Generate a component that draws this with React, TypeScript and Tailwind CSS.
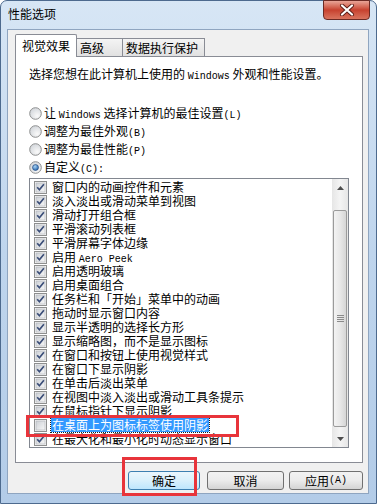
import React from "react";

const cjk = "font-['Noto_Sans_CJK_SC',sans-serif]";

function M({ children }: { children: React.ReactNode }) {
  return <span className="font-['Liberation_Mono',monospace] text-[10px]">{children}</span>;
}

function CheckBox({ checked }: { checked: boolean }) {
  return (
    <svg width="13" height="13" viewBox="0 0 13 13" className="shrink-0">
      <defs>
        <linearGradient id="cbg" x1="0" y1="0" x2="1" y2="1">
          <stop offset="0" stopColor="#cdd1d6" />
          <stop offset="1" stopColor="#f7f7f7" />
        </linearGradient>
      </defs>
      <rect x="0.5" y="0.5" width="12" height="12" fill="#f4f4f4" stroke="#8e8f8f" />
      <rect x="2" y="2" width="9" height="9" fill="url(#cbg)" stroke="#aeb3b9" strokeWidth="0.6" />
      {checked && (
        <path d="M3.2 6.3 L5.4 8.8 L9.9 3.3" fill="none" stroke="#3a4d78" strokeWidth="1.7" />
      )}
    </svg>
  );
}

function Radio({ checked }: { checked: boolean }) {
  return (
    <svg width="13" height="13" viewBox="0 0 13 13" className="shrink-0">
      <defs>
        <radialGradient id="rbg" cx="0.65" cy="0.7" r="0.8">
          <stop offset="0" stopColor="#fafafa" />
          <stop offset="1" stopColor="#cfd3d8" />
        </radialGradient>
        <radialGradient id="rdot" cx="0.4" cy="0.35" r="0.7">
          <stop offset="0" stopColor="#a9d4f5" />
          <stop offset="1" stopColor="#1d5ea8" />
        </radialGradient>
      </defs>
      <circle cx="6.5" cy="6.5" r="5.8" fill="url(#rbg)" stroke="#8e8f8f" />
      {checked && <circle cx="6.5" cy="6.5" r="3" fill="url(#rdot)" stroke="#25487c" strokeWidth="0.6" />}
    </svg>
  );
}

const items: { label: React.ReactNode; checked: boolean; selected?: boolean }[] = [
  { label: "窗口内的动画控件和元素", checked: true },
  { label: "淡入淡出或滑动菜单到视图", checked: true },
  { label: "滑动打开组合框", checked: true },
  { label: "平滑滚动列表框", checked: true },
  { label: "平滑屏幕字体边缘", checked: true },
  { label: <>启用 <M>Aero Peek</M></>, checked: true },
  { label: "启用透明玻璃", checked: true },
  { label: "启用桌面组合", checked: true },
  { label: "任务栏和「开始」菜单中的动画", checked: true },
  { label: "拖动时显示窗口内容", checked: true },
  { label: "显示半透明的选择长方形", checked: true },
  { label: "显示缩略图，而不是显示图标", checked: true },
  { label: "在窗口和按钮上使用视觉样式", checked: true },
  { label: "在窗口下显示阴影", checked: true },
  { label: "在单击后淡出菜单", checked: true },
  { label: "在视图中淡入淡出或滑动工具条提示", checked: true },
  { label: "在鼠标指针下显示阴影", checked: true },
  { label: "在桌面上为图标标签使用阴影", checked: false, selected: true },
  { label: "在最大化和最小化时动态显示窗口", checked: true },
];

function WinButton({ children, def, w }: { children: React.ReactNode; def?: boolean; w: string }) {
  return (
    <div
      className={`${w} h-[19px] rounded-[3px] border ${
        def ? "border-[#3c7fb1]" : "border-[#707070]"
      } bg-gradient-to-b ${
        def ? "from-[#eaf6fd] via-[#d9f0fc] to-[#bee6fd]" : "from-[#f2f2f2] via-[#ebebeb] to-[#d4d4d4]"
      } flex items-center justify-center text-[12px] leading-[14px] text-black`}
    >
      {children}
    </div>
  );
}

export default function App() {
  return (
    <div className={`relative w-[377px] h-[504px] bg-white ${cjk}`}>
      <div className="w-full h-full rounded-t-[7px] border border-[#4d6a8e] bg-gradient-to-b from-[#d7e6f5] via-[#bfd5ed] to-[#b3cce8] flex flex-col">
        {/* title bar */}
        <div className="h-[28px] flex items-start">
          <div className="pl-[7px] pt-[6px] text-[12px] leading-[14px] text-black">性能选项</div>
          <div className="ml-auto mr-[6px] -mt-px w-[47px] h-[20px] rounded-b-[4px] border border-[#6b2a24] bg-gradient-to-b from-[#e8a497] via-[#c7412f] to-[#d9735e] flex items-center justify-center">
            <svg width="16" height="12" viewBox="0 0 16 12">
              <path d="M3 1.5 L13 10.5 M13 1.5 L3 10.5" stroke="#5a1c16" strokeWidth="4" strokeLinecap="round" />
              <path d="M3 1.5 L13 10.5 M13 1.5 L3 10.5" stroke="#ffffff" strokeWidth="2.2" strokeLinecap="round" />
            </svg>
          </div>
        </div>

        {/* client area */}
        <div className="ml-[6px] w-[362px] h-[465px] border border-[#8fa5c0] bg-[#f0f0f0] flex flex-col">
          {/* tabs */}
          <div className="mt-[4px] ml-[7px] h-[22px] flex items-end text-[12px] leading-[14px] text-black">
            <div className="relative z-10 -mb-px w-[62px] h-[23px] border border-b-0 border-[#898c95] bg-white pl-[6px] pt-[4px] rounded-t-[2px]">
              视觉效果
            </div>
            <div className="w-[46px] h-[18px] border border-l-0 border-b-0 border-[#898c95] bg-gradient-to-b from-[#f4f4f4] to-[#e1e1e1] pl-[3px] pt-[2px]">
              高级
            </div>
            <div className="w-[82px] h-[18px] border border-l-0 border-b-0 border-[#898c95] bg-gradient-to-b from-[#f4f4f4] to-[#e1e1e1] pl-[3px] pt-[2px]">
              数据执行保护
            </div>
          </div>

          {/* panel */}
          <div className="ml-[7px] w-[348px] h-[407px] border border-[#898c95] bg-white flex flex-col pl-[13px] text-[12px] leading-[14px] text-black">
            <div className="mt-[10px] h-[14px] whitespace-nowrap">
              选择您想在此计算机上使用的 <M>Windows</M> 外观和性能设置。
            </div>
            <div className="mt-[23px] flex flex-col">
              {[
                { l: <>让 <M>Windows</M> 选择计算机的最佳设置<M>(L)</M></>, c: false },
                { l: <>调整为最佳外观<M>(B)</M></>, c: false },
                { l: <>调整为最佳性能<M>(P)</M></>, c: false },
                { l: <>自定义<M>(C):</M></>, c: true },
              ].map((r, i) => (
                <div key={i} className="h-[18px] flex items-center whitespace-nowrap">
                  <Radio checked={r.c} />
                  <span className="ml-[2px] inline-block h-[14px] leading-[14px]">{r.l}</span>
                </div>
              ))}
            </div>

            {/* list */}
            <div className="mt-[2px] w-[320px] h-[270px] border border-[#828790] flex">
              <div className="flex-1 pt-[1px] overflow-hidden">
                {items.map((it, i) => (
                  <div key={i} className="h-[14px] flex items-center whitespace-nowrap">
                    <div className="ml-[4px]">
                      <CheckBox checked={it.checked} />
                    </div>
                    <span
                      className={`ml-[4px] px-px inline-block h-[14px] leading-[14px] ${
                        it.selected ? "bg-[#3399ff] text-white outline-1 outline-dotted outline-[#1c1c1c]" : ""
                      }`}
                    >
                      {it.label}
                    </span>
                  </div>
                ))}
              </div>
              {/* scrollbar */}
              <div className="w-[16px] flex flex-col bg-gradient-to-r from-[#e6e6e6] via-[#f4f4f4] to-[#e6e6e6]">
                <div className="h-[17px] flex items-center justify-center">
                  <svg width="7" height="4" viewBox="0 0 7 4">
                    <path d="M0 4 L3.5 0 L7 4 Z" fill="#4d4d4d" />
                  </svg>
                </div>
                <div className="h-[14px]" />
                <div className="h-[217px] mx-px rounded-[2px] border border-[#9b9b9b] bg-gradient-to-r from-[#f3f3f3] via-[#e8e8e8] to-[#d6d6d6] flex items-center justify-center">
                  <div className="flex flex-col gap-px">
                    <div className="w-[7px] h-px bg-[#8a8a8a]" />
                    <div className="w-[7px] h-px bg-[#8a8a8a]" />
                    <div className="w-[7px] h-px bg-[#8a8a8a]" />
                    <div className="w-[7px] h-px bg-[#8a8a8a]" />
                  </div>
                </div>
                <div className="h-[3px]" />
                <div className="h-[17px] flex items-center justify-center">
                  <svg width="7" height="4" viewBox="0 0 7 4">
                    <path d="M0 0 L3.5 4 L7 0 Z" fill="#4d4d4d" />
                  </svg>
                </div>
              </div>
            </div>
          </div>

          {/* buttons */}
          <div className="mt-[8px] ml-[120px] flex">
            <WinButton def w="w-[72px]">确定</WinButton>
            <div className="w-[7px]" />
            <WinButton w="w-[77px]">取消</WinButton>
            <div className="w-[5px]" />
            <WinButton w="w-[74px]">
              应用<M>(A)</M>
            </WinButton>
          </div>
        </div>
      </div>

      {/* red annotation boxes */}
      <div className="absolute left-[26px] top-[415px] w-[213px] h-[22px] border-[3px] border-[#e8343b]" />
      <div className="absolute left-[122px] top-[457px] w-[75px] h-[39px] border-[3px] border-[#e8343b]" />
    </div>
  );
}
